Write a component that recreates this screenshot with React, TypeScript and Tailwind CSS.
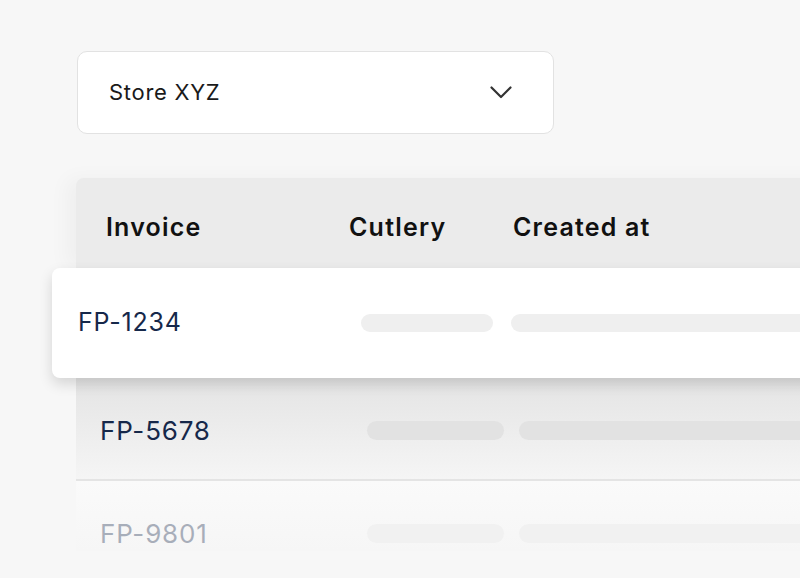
import React from 'react';

const font = { fontFamily: '"Inter", "Open Sans", sans-serif' };

const Chevron: React.FC = () => (
  <svg width="22" height="13" viewBox="0 0 22 13" fill="none" className="text-[#333]">
    <polyline points="1.5,1.5 11,11 20.5,1.5" stroke="currentColor" strokeWidth="2.2" strokeLinecap="round" strokeLinejoin="round" />
  </svg>
);

const App: React.FC = () => {
  return (
    <div className="w-[800px] h-[578px] overflow-hidden bg-[#f7f7f7] pt-[51px] pl-[77px]" style={font}>
      {/* store picker */}
      <div className="w-[477px] h-[83px] rounded-[10px] border border-[#e2e2e2] bg-white flex items-center justify-between pl-[31px] pr-[41px]">
        <span className="text-[22px] text-[#1a1a1a] tracking-[0.7px]">Store XYZ</span>
        <Chevron />
      </div>

      {/* table */}
      <div className="mt-[44px] -ml-px w-[760px] relative">
        <div className="h-[90px] pt-[10px] bg-[#ebebeb] rounded-tl-[8px] flex items-center text-[25px] font-semibold tracking-[1.2px] text-[#111] shadow-[-10px_0_20px_rgba(0,0,0,0.035)]">
          <div className="w-[273px] pl-[30px]">Invoice</div>
          <div className="w-[164px]">Cutlery</div>
          <div>Created at</div>
        </div>

        {/* hovered row */}
        <div className="relative z-10 -ml-[24px] h-[110px] bg-white rounded-[8px] shadow-[0_6px_14px_rgba(0,0,0,0.14)] flex items-center">
          <div className="w-[309px] pl-[26px] text-[25px] tracking-[0.8px] text-[#16284a]">FP-1234</div>
          <div className="w-[132px] h-[18px] rounded-full bg-[#efefef]"></div>
          <div className="ml-[18px] flex-1 h-[18px] rounded-l-full bg-[#efefef]"></div>
        </div>

        <div className="h-[103px] pt-[4px] bg-gradient-to-b from-[#e4e4e4] to-[#f5f5f5] border-b-2 border-[#e4e4e4] flex items-center">
          <div className="w-[291px] pl-[24px] text-[26px] tracking-[0.8px] text-[#16284a]">FP-5678</div>
          <div className="w-[137px] h-[19px] rounded-full bg-[#e2e2e2]"></div>
          <div className="ml-[15px] flex-1 h-[19px] rounded-l-full bg-[#e2e2e2]"></div>
        </div>

        <div className="h-[70px] bg-gradient-to-b from-[#fafafa] to-[#f6f6f6] flex items-end pb-[2px] overflow-hidden">
          <div className="w-[291px] pl-[24px] text-[26px] tracking-[0.8px] text-[#16284a] opacity-35 translate-y-[4px]">FP-9801</div>
          <div className="w-[137px] h-[19px] rounded-full bg-[#f1f1f1] mb-[6px]"></div>
          <div className="ml-[15px] flex-1 h-[19px] rounded-l-full bg-[#f1f1f1] mb-[6px]"></div>
        </div>
      </div>
    </div>
  );
};

export default App;
